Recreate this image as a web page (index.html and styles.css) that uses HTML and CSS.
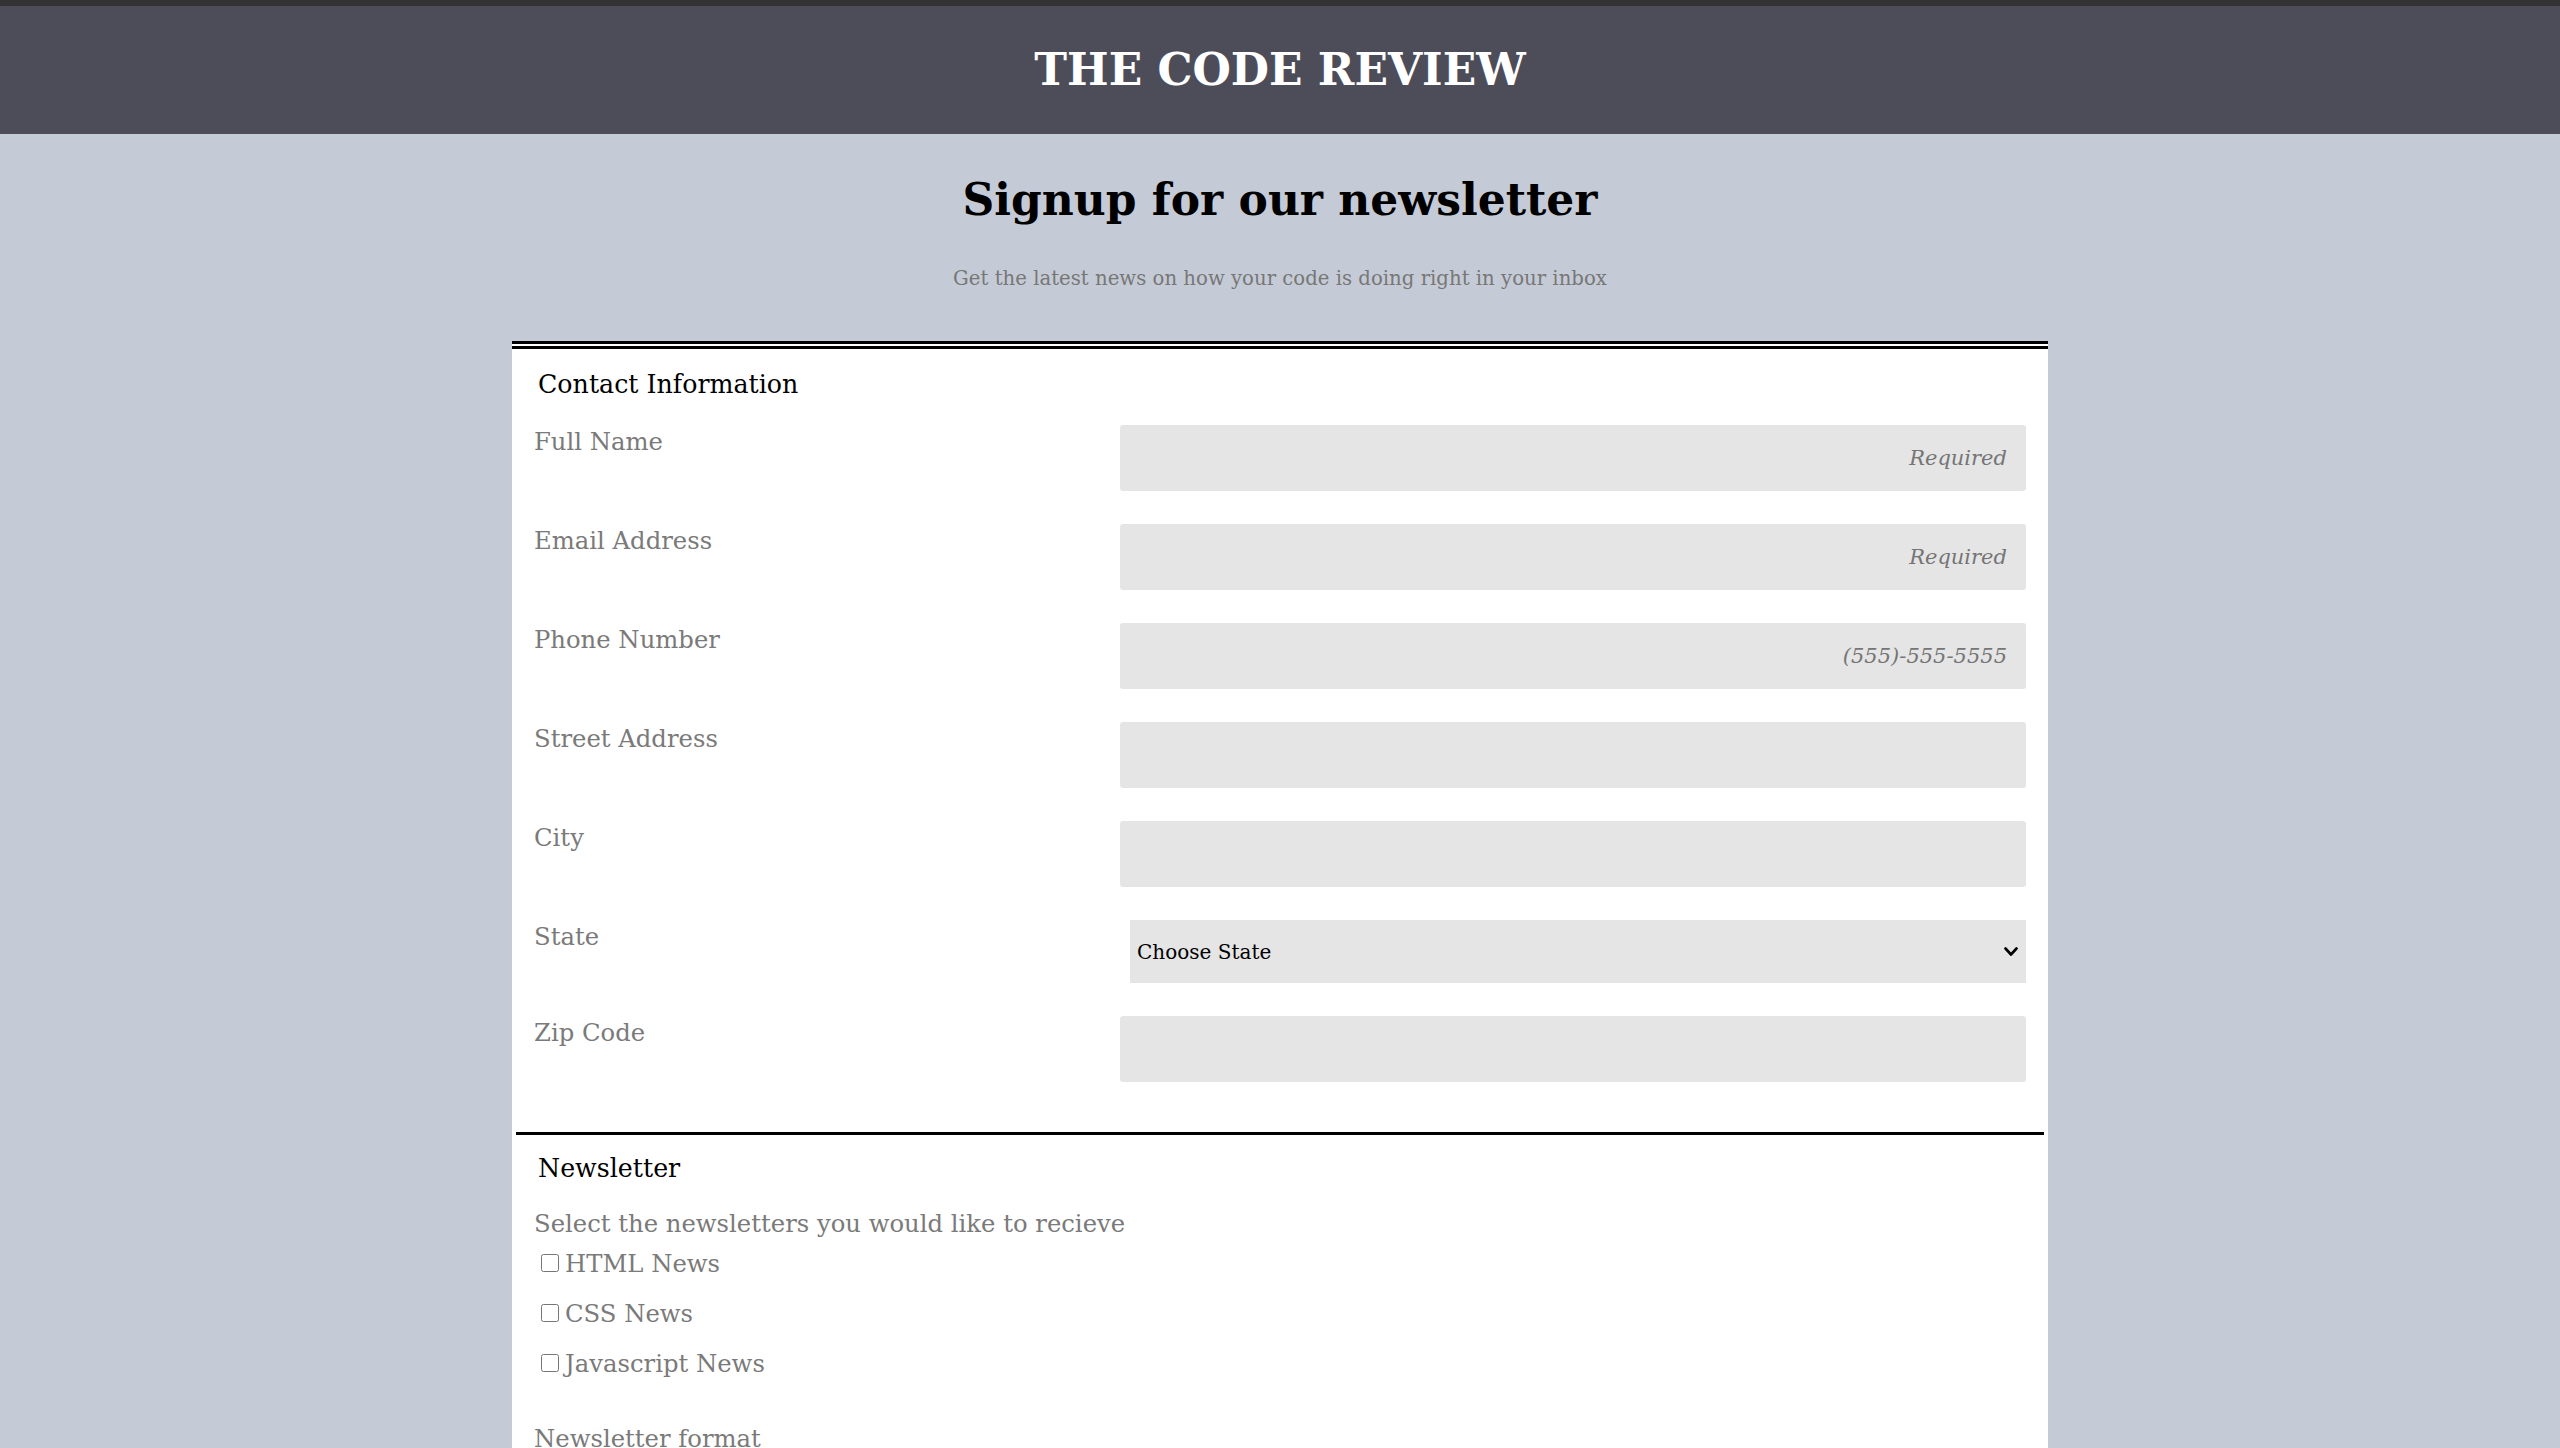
FILE: index.html
```html
<!DOCTYPE html>
<html lang="en">
<head>
<meta charset="utf-8">
<title>The Code Review</title>
<link rel="stylesheet" href="styles.css">
</head>
<body>
<header class="site-header">
  <h1 class="site-title">THE CODE REVIEW</h1>
</header>
<main class="page">
  <h2 class="page-title">Signup for our newsletter</h2>
  <p class="page-sub">Get the latest news on how your code is doing right in your inbox</p>
  <form class="panel">
    <section class="group">
      <h3 class="group-title">Contact Information</h3>
      <div class="row">
        <label class="label" for="name">Full Name</label>
        <input class="field" id="name" type="text" placeholder="Required">
      </div>
      <div class="row">
        <label class="label" for="email">Email Address</label>
        <input class="field" id="email" type="email" placeholder="Required">
      </div>
      <div class="row">
        <label class="label" for="phone">Phone Number</label>
        <input class="field" id="phone" type="tel" placeholder="(555)-555-5555">
      </div>
      <div class="row">
        <label class="label" for="street">Street Address</label>
        <input class="field" id="street" type="text">
      </div>
      <div class="row">
        <label class="label" for="city">City</label>
        <input class="field" id="city" type="text">
      </div>
      <div class="row">
        <label class="label" for="state">State</label>
        <div class="select-wrap">
          <select class="select" id="state">
            <option>Choose State</option>
          </select>
          <svg class="chevron" width="14" height="10" viewBox="0 0 14 10"><polyline points="1.5,1.5 7,7.5 12.5,1.5" fill="none" stroke="#000" stroke-width="2.6" stroke-linecap="round" stroke-linejoin="round"/></svg>
        </div>
      </div>
      <div class="row">
        <label class="label" for="zip">Zip Code</label>
        <input class="field" id="zip" type="text">
      </div>
    </section>
    <section class="group group-news">
      <h3 class="group-title">Newsletter</h3>
      <p class="label prompt">Select the newsletters you would like to recieve</p>
      <label class="check"><input class="box" type="checkbox">HTML News</label>
      <label class="check"><input class="box" type="checkbox">CSS News</label>
      <label class="check"><input class="box" type="checkbox">Javascript News</label>
      <p class="label prompt format">Newsletter format</p>
    </section>
  </form>
</main>
</body>
</html>
```
FILE: styles.css
```css
* { box-sizing: border-box; }

body {
  margin: 0;
  background: #c5cbd6;
  font-family: "DejaVu Serif", "Liberation Serif", serif;
  color: #777;
}

.site-header {
  border-top: 6px solid #333;
  background: #4d4d5a;
  height: 134px;
  display: flex;
  align-items: center;
  justify-content: center;
}

.site-title {
  margin: 0;
  color: #fff;
  font-size: 44px;
  font-weight: 700;
  line-height: 1;
}

.page {
  display: flex;
  flex-direction: column;
  align-items: center;
}

.page-title {
  margin: 40px 0 0;
  color: #000;
  font-size: 44px;
  font-weight: 700;
  line-height: 52px;
}

.page-sub {
  margin: 41px 0 0;
  font-size: 19.7px;
  line-height: 24px;
  color: #777;
}

.panel {
  width: 1536px;
  margin-top: 50px;
  background: #fff;
  border-top: 8px double #000;
  padding: 0 22px 260px;
}

.group {
  padding: 20px 0 17px;
}

.group-news {
  border-top: 3px solid #000;
  margin: 0 -18px;
  padding: 18px 18px 0;
}

.group-title {
  margin: 0 0 25px 4px;
  color: #000;
  font-size: 25.3px;
  font-weight: 400;
  line-height: 31px;
}

.row {
  display: flex;
  align-items: flex-start;
  margin-bottom: 33px;
}

.label {
  flex: 1;
  padding-top: 2px;
  font-size: 24.3px;
  line-height: 30px;
  color: #7a7a7a;
}

.field {
  width: 906px;
  height: 66px;
  border: none;
  border-radius: 3px;
  background: #e5e5e5;
  padding: 0 19px;
  text-align: right;
  font-family: inherit;
  font-size: 21px;
  color: #333;
}

.field::placeholder {
  color: #757575;
  font-style: italic;
}

.select-wrap {
  width: 896px;
  height: 63px;
  background: #e5e5e5;
  display: flex;
  align-items: center;
}

.select {
  flex: 1;
  height: 100%;
  appearance: none;
  -webkit-appearance: none;
  border: none;
  background: transparent;
  padding: 0 0 0 7px;
  font-family: inherit;
  font-size: 20px;
  color: #000;
}

.chevron {
  margin-right: 8px;
  flex: none;
}

.prompt {
  margin: 14px 0 9px;
  padding-top: 0;
}

.format {
  margin-top: 46px;
}

.check {
  display: flex;
  align-items: center;
  height: 30px;
  margin-bottom: 20px;
  font-size: 24.3px;
  color: #7a7a7a;
}

.box {
  width: 18px;
  height: 18px;
  margin: 0 6px 0 7px;
}
```
